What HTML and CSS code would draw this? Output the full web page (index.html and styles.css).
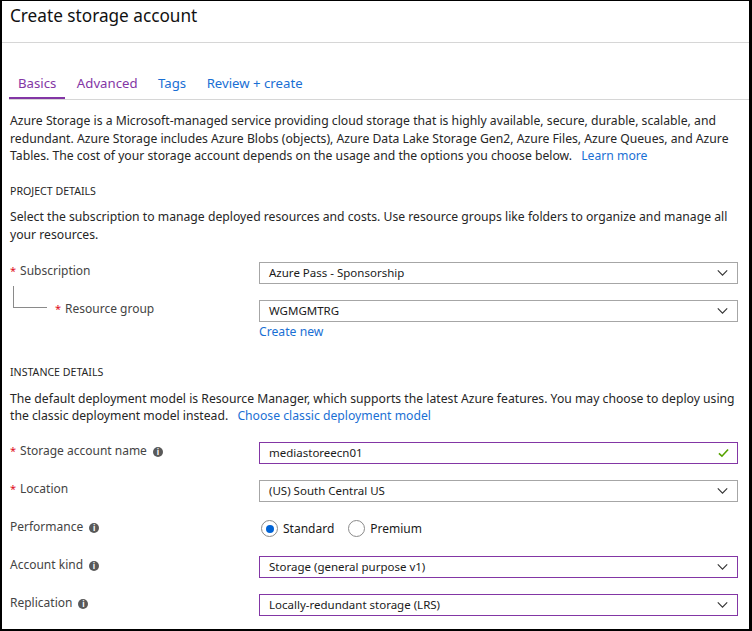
FILE: index.html
```html
<!DOCTYPE html>
<html lang="en">
<head>
<meta charset="utf-8">
<title>Create storage account</title>
<link rel="stylesheet" href="styles.css">
</head>
<body>
<div class="frame">
  <header class="title-bar">
    <h1 class="title">Create storage account</h1>
  </header>
  <div class="content">
    <nav class="tabs">
      <a class="tab tab-active">Basics</a>
      <a class="tab tab-visited">Advanced</a>
      <a class="tab">Tags</a>
      <a class="tab">Review + create</a>
    </nav>

    <p class="desc">Azure Storage is a Microsoft-managed service providing cloud storage that is highly available, secure, durable, scalable, and redundant. Azure Storage includes Azure Blobs (objects), Azure Data Lake Storage Gen2, Azure Files, Azure Queues, and Azure Tables. The cost of your storage account depends on the usage and the options you choose below. <a class="link">Learn more</a></p>

    <h2 class="section">PROJECT DETAILS</h2>
    <p class="desc desc-tight">Select the subscription to manage deployed resources and costs. Use resource groups like folders to organize and manage all your resources.</p>

    <div class="row row-first">
      <div class="label"><span class="req">*</span>Subscription</div>
      <div class="field">
        <div class="select"><span>Azure Pass - Sponsorship</span><svg class="chev" viewBox="0 0 12 7"><path d="M0.5 0.5 L6 6 L11.5 0.5" /></svg></div>
      </div>
    </div>

    <div class="row">
      <div class="label label-nested"><span class="tree"></span><span class="req">*</span>Resource group</div>
      <div class="field">
        <div class="select"><span>WGMGMTRG</span><svg class="chev" viewBox="0 0 12 7"><path d="M0.5 0.5 L6 6 L11.5 0.5" /></svg></div>
        <a class="link create-new">Create new</a>
      </div>
    </div>

    <h2 class="section section-instance">INSTANCE DETAILS</h2>
    <p class="desc desc-tight desc-instance">The default deployment model is Resource Manager, which supports the latest Azure features. You may choose to deploy using the classic deployment model instead. <a class="link">Choose classic deployment model</a></p>

    <div class="row row-first">
      <div class="label"><span class="req">*</span>Storage account name<span class="info">i</span></div>
      <div class="field">
        <div class="select select-focus"><span>mediastoreecn01</span><svg class="check" viewBox="0 0 12 10"><path d="M1 5.5 L4.3 8.5 L11 1.2" /></svg></div>
      </div>
    </div>

    <div class="row">
      <div class="label"><span class="req">*</span>Location</div>
      <div class="field">
        <div class="select"><span>(US) South Central US</span><svg class="chev" viewBox="0 0 12 7"><path d="M0.5 0.5 L6 6 L11.5 0.5" /></svg></div>
      </div>
    </div>

    <div class="row">
      <div class="label">Performance<span class="info">i</span></div>
      <div class="field radios">
        <span class="radio radio-on"></span><span class="radio-text">Standard</span>
        <span class="radio"></span><span class="radio-text">Premium</span>
      </div>
    </div>

    <div class="row">
      <div class="label">Account kind<span class="info">i</span></div>
      <div class="field">
        <div class="select select-focus"><span>Storage (general purpose v1)</span><svg class="chev" viewBox="0 0 12 7"><path d="M0.5 0.5 L6 6 L11.5 0.5" /></svg></div>
      </div>
    </div>

    <div class="row">
      <div class="label">Replication<span class="info">i</span></div>
      <div class="field">
        <div class="select select-focus"><span>Locally-redundant storage (LRS)</span><svg class="chev" viewBox="0 0 12 7"><path d="M0.5 0.5 L6 6 L11.5 0.5" /></svg></div>
      </div>
    </div>
  </div>
</div>
</body>
</html>
```
FILE: styles.css
```css
* { box-sizing: border-box; }
html, body { margin: 0; padding: 0; background: #fff; }
body {
  font-family: "Noto Sans", "Open Sans", sans-serif;
  font-size: 12.2px;
  color: #262626;
}
.frame {
  width: 752px;
  height: 631px;
  border-style: solid;
  border-color: #000;
  border-width: 1px 3px 2px 2px;
  overflow: hidden;
}
.title-bar {
  height: 42px;
  border-bottom: 1px solid #d6d6d6;
  padding: 3px 0 0 8px;
}
.title {
  margin: 0;
  font-size: 17.2px;
  font-weight: 400;
  line-height: 24px;
  color: #111;
}
.content {
  padding: 0 0 0 7px;
}
.tabs {
  display: flex;
  margin-top: 30px;
  border-bottom: 1px solid #d6d6d6;
}
.tab {
  font-size: 13.2px;
  line-height: 20px;
  padding: 0 9px 4px;
  margin-right: 2.5px;
  color: #1a6fd4;
  border-bottom: 2px solid transparent;
}
.tab-active { color: #8336a5; border-bottom-color: #8336a5; }
.tab-visited { color: #8336a5; }
.link { color: #1a6fd4; margin-left: 6px; }
.desc {
  margin: 12px 0 0 1px;
  padding-right: 10px;
  line-height: 17.6px;
}
.desc-tight { margin-top: 9px; line-height: 18.5px; }
.desc-instance { margin-top: 10px; line-height: 17.5px; }
.section {
  margin: 18px 0 0 1px;
  font-size: 10.6px;
  font-weight: 400;
  line-height: 16px;
  color: #262626;
}
.section-instance { margin-top: 24px; }
.row {
  display: flex;
  align-items: flex-start;
  margin-top: 16px;
  padding-right: 11px;
}
.row-first { margin-top: 17px; }
.label {
  width: 250px;
  flex: none;
  display: flex;
  align-items: center;
  height: 22px;
  padding-left: 1px;
  color: #444;
  font-size: 12px;
  margin-top: -2px;
}
.label-nested { padding-left: 46px; position: relative; }
.tree {
  position: absolute;
  left: 4px;
  top: -12px;
  width: 34px;
  height: 22px;
  border-left: 1px solid #8a8a8a;
  border-bottom: 1px solid #8a8a8a;
}
.req { color: #e00b1c; margin-right: 4px; font-size: 11px; }
.info {
  display: inline-flex;
  align-items: center;
  justify-content: center;
  width: 10px;
  height: 10px;
  border-radius: 50%;
  background: #595959;
  color: #fff;
  font-size: 8px;
  font-weight: 700;
  line-height: 1;
  margin-left: 6px;
  margin-top: 2px;
}
.field { flex: 1; }
.select {
  height: 22px;
  border: 1px solid #a6a6a6;
  display: flex;
  align-items: center;
  justify-content: space-between;
  padding: 0 8px 0 9px;
  color: #1a1a1a;
  font-size: 11.5px;
}
.select-focus { border-color: #8336a5; }
.chev { width: 11px; height: 6px; fill: none; stroke: #333; stroke-width: 1.3; margin-right: 1px; }
.check { width: 11px; height: 10px; fill: none; stroke: #57a300; stroke-width: 1.8; }
.create-new { display: block; margin: 1px 0 0 0; line-height: 17px; }
.radios { display: flex; align-items: center; height: 22px; }
.radio {
  width: 17px;
  height: 17px;
  border-radius: 50%;
  border: 1px solid #8a8a8a;
  display: inline-flex;
  align-items: center;
  justify-content: center;
  margin-left: 2px;
}
.radio-on::after {
  content: "";
  width: 8px;
  height: 8px;
  border-radius: 50%;
  background: #0063d6;
}
.radio-text { margin-left: 5px; margin-right: 12px; font-size: 12px; color: #1a1a1a; }
```
